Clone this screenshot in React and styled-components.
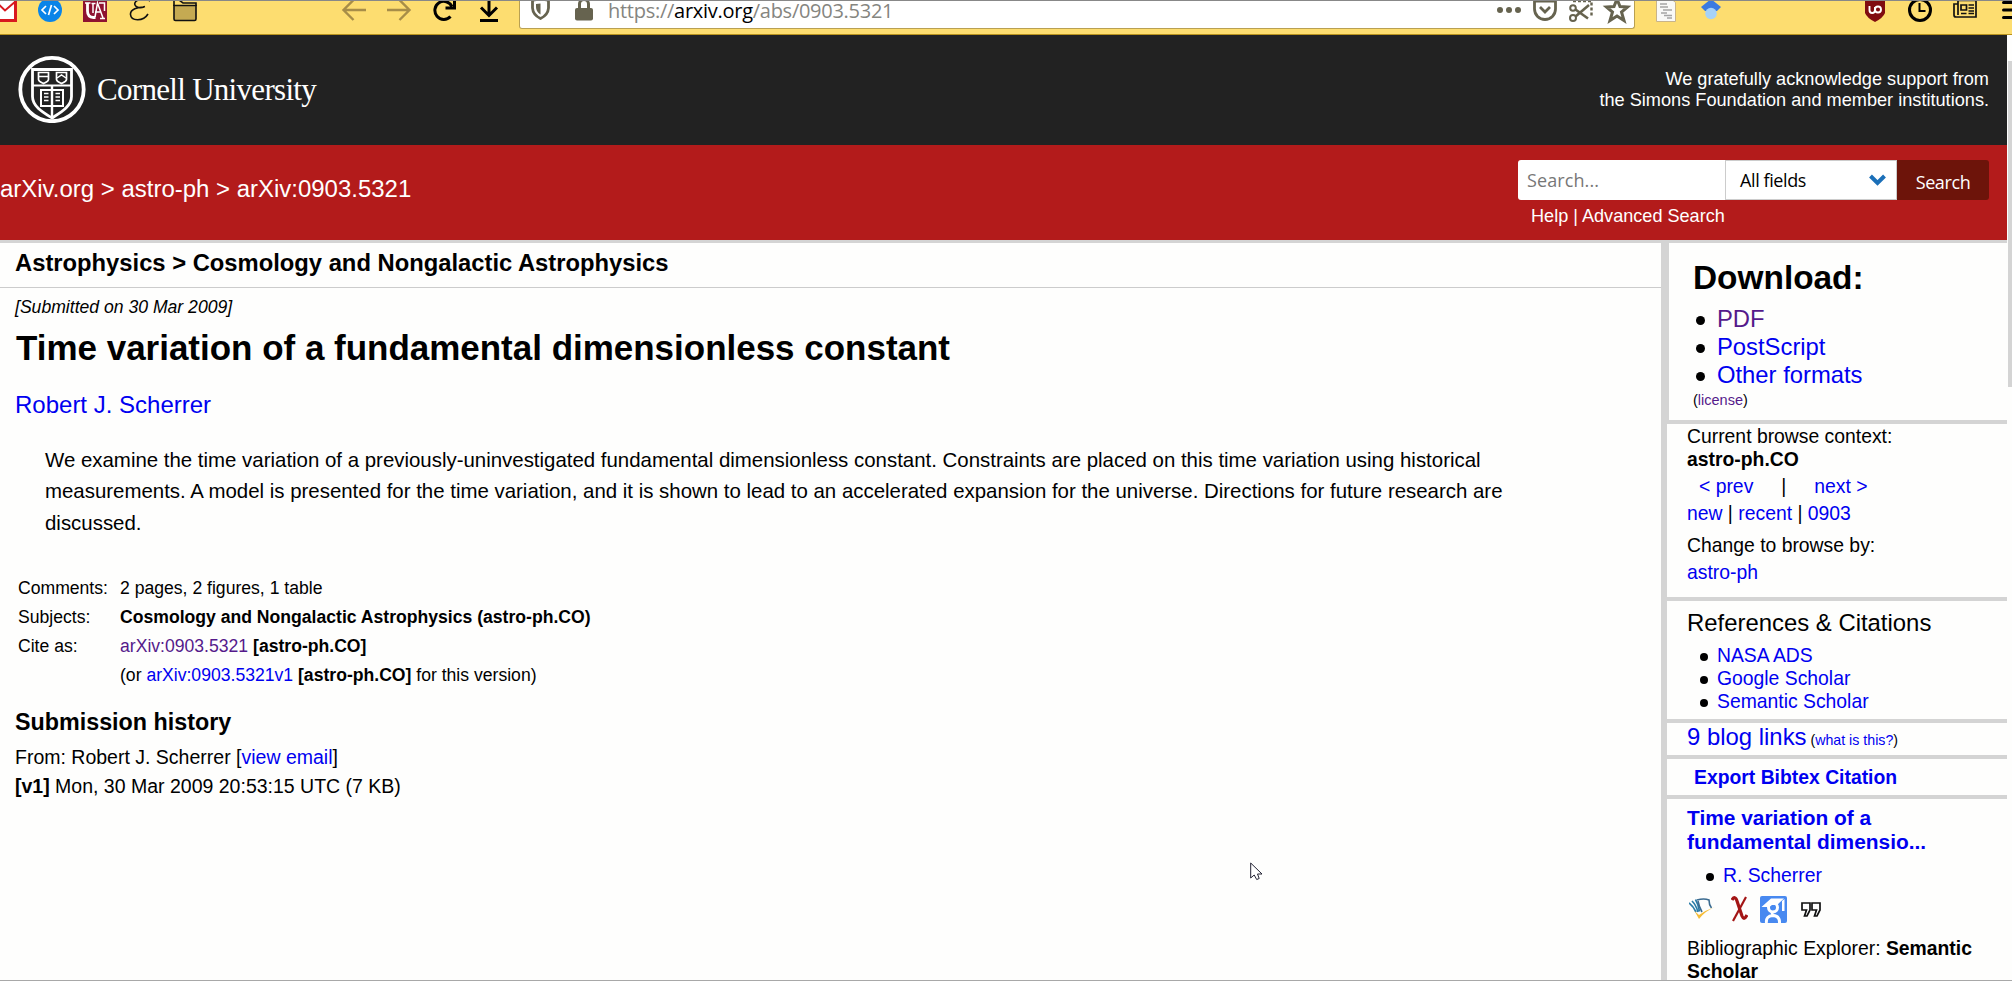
import React from "react";
import styled, { createGlobalStyle } from "styled-components";

const Global = createGlobalStyle`
  * { box-sizing: border-box; }
  html, body { margin: 0; padding: 0; height: 981px; overflow: hidden; background: #fefefd; }
  body { font-family: "Liberation Sans", Arial, sans-serif; color: #000; }
  a { color: #0000f0; text-decoration: none; }
  h1, h2, h3, p, ul, dl { margin: 0; padding: 0; }
  ul { list-style: none; }
`;

const Window = styled.div`
  position: relative;
  width: 2012px;
  height: 981px;
  overflow: hidden;
  display: flex;
  flex-direction: column;
  border-top: 1px solid #888;
  border-bottom: 1px solid #a8a8a8;
`;

/* browser toolbar */
const Toolbar = styled.div`
  height: 34px;
  flex: none;
  display: flex;
  align-items: flex-start;
  background: #fddd70;
  border-bottom: 1px solid #b8921d;
  overflow: hidden;
`;
const ToolIcon = styled.svg`
  display: block;
  flex: none;
  width: ${(p) => p.$w || 24}px;
  height: 24px;
  margin-top: -2px;
  margin-left: ${(p) => p.$gap || 0}px;
  overflow: visible;
`;
const UrlBar = styled.div`
  flex: none;
  width: 1116px;
  height: 28px;
  margin-left: 21px;
  padding-right: 5px;
  display: flex;
  align-items: flex-start;
  background: #fff;
  border: 1px solid #b9a052;
  border-top: 0;
  border-radius: 0 0 3px 3px;
`;
const Url = styled.div`
  width: 600px;
  margin-left: 15px;
  margin-top: -4px;
  font: 20px/28px "Open Sans", "Noto Sans", sans-serif;
  letter-spacing: -0.27px;
  color: #85857f;
  white-space: nowrap;
  b { font-weight: 400; color: #000; }
`;
const Spacer = styled.div`
  flex: 1;
`;

/* page */
const Viewport = styled.div`
  flex: 1;
  min-height: 0;
  display: flex;
`;
const Page = styled.div`
  width: 2007px;
  display: flex;
  flex-direction: column;
`;
const Scrollbar = styled.div`
  width: 5px;
  padding: 26px 0 0 1px;
  background: #fefefd;
`;
const Thumb = styled.div`
  height: 326px;
  background: #d4d4d4;
`;

const Brand = styled.header`
  height: 110px;
  flex: none;
  display: flex;
  align-items: flex-start;
  justify-content: space-between;
  background: #222;
  color: #fff;
  padding: 0 18px;
`;
const Logo = styled.div`
  display: flex;
  align-items: flex-start;
  padding-top: 20px;
`;
const LogoText = styled.div`
  margin: 15px 0 0 11px;
  font: 31px/40px "Liberation Serif", serif;
  letter-spacing: -0.7px;
  white-space: nowrap;
`;
const Support = styled.p`
  padding-top: 34px;
  font-size: 18.17px;
  line-height: 21px;
  text-align: right;
`;

const RedBar = styled.div`
  height: 98px;
  flex: none;
  display: flex;
  justify-content: space-between;
  background: #b31b1b;
  border-bottom: 3px solid #d4d4d4;
  color: #fff;
`;
const Crumbs = styled.div`
  padding-top: 30px;
  font-size: 23.97px;
  line-height: 28px;
  white-space: nowrap;
`;
const SearchArea = styled.div`
  width: 489px;
  padding: 15px 18px 0 0;
`;
const SearchForm = styled.div`
  display: flex;
  height: 40px;
  font: 18px/38px "Open Sans", "Noto Sans", sans-serif;
  border-radius: 3px;
  overflow: hidden;
`;
const SearchInput = styled.div`
  width: 207px;
  padding: 1px 0 0 9px;
  background: #fff;
  color: #777;
  letter-spacing: 0.1px;
`;
const FieldSelect = styled.div`
  width: 172px;
  padding: 0 10px 0 14px;
  display: flex;
  align-items: center;
  justify-content: space-between;
  background: #fff;
  color: #000;
  border: 1px solid #ccc;
  letter-spacing: -0.4px;
`;
const SearchButton = styled.div`
  width: 92px;
  padding-top: 3px;
  text-align: center;
  background: #6d140a;
  letter-spacing: -0.4px;
`;
const SearchHelp = styled.div`
  padding-left: 13px;
  margin-top: 6px;
  font-size: 18.1px;
  line-height: 21px;
`;

const Body = styled.div`
  flex: 1;
  min-height: 0;
  display: flex;
`;
const Main = styled.main`
  width: 1661px;
`;
const SubjectHeader = styled.div`
  height: 45px;
  padding: 6px 0 0 15px;
  border-bottom: 1px solid #ccc;
  font-size: 23.77px;
  line-height: 28px;
  font-weight: 700;
`;
const Dateline = styled.div`
  padding: 8px 0 0 15px;
  font-size: 17.6px;
  line-height: 22px;
  font-style: italic;
`;
const Title = styled.h1`
  padding: 9px 0 0 16px;
  font-size: 34.97px;
  line-height: 42px;
`;
const Authors = styled.div`
  padding: 22px 0 0 15px;
  font-size: 24px;
  line-height: 28px;
`;
const Abstract = styled.p`
  padding: 26px 0 0 45px;
  font-size: 20.43px;
  line-height: 31.3px;
  white-space: nowrap;
`;
const Meta = styled.dl`
  display: grid;
  grid-template-columns: 102px 1fr;
  grid-auto-rows: 29px;
  padding: 35px 0 0 18px;
  font-size: 17.6px;
  line-height: 29px;
  dt, dd { margin: 0; white-space: nowrap; }
`;
const HistoryTitle = styled.h2`
  padding: 18px 0 0 15px;
  font-size: 23.3px;
  line-height: 28px;
`;
const HistoryLine = styled.div`
  padding-left: 15px;
  font-size: 19.5px;
  line-height: 29px;
  &:nth-of-type(1) { margin-top: 7px; }
`;

const Aside = styled.aside`
  width: 346px;
  border-left: 6px solid #d4d4d4;
`;
const Panel = styled.section`
  height: ${(p) => p.$h}px;
  padding: ${(p) => p.$top || 0}px 0 0 ${(p) => p.$left || 20}px;
  border-left: ${(p) => p.$edge || 0}px solid #d4d4d4;
  border-bottom: 4px solid #d4d4d4;
  white-space: nowrap;
  overflow: hidden;
`;
const Line = styled.div`
  font-size: ${(p) => p.$size || 19.35}px;
  line-height: ${(p) => p.$lh || 23}px;
  font-weight: ${(p) => (p.$bold ? 700 : 400)};
  margin-top: ${(p) => p.$gap || 0}px;
`;
const Bullets = styled.ul`
  margin-top: ${(p) => p.$gap || 0}px;
  padding-left: ${(p) => p.$indent}px;
  font-size: ${(p) => p.$size || 19.35}px;
`;
const Bullet = styled.li`
  display: flex;
  align-items: center;
  line-height: ${(p) => p.$lh || 23}px;
  &::before {
    content: "";
    width: ${(p) => p.$dot || 8}px;
    height: ${(p) => p.$dot || 8}px;
    margin: 3px ${(p) => p.$space}px 0 0;
    border-radius: 50%;
    background: #000;
  }
`;
const Visited = styled.a`
  && { color: #551a8b; }
`;
const Small = styled.span`
  font-size: 14.2px;
`;
const PrevNext = styled(Line)`
  display: flex;
  padding-left: 12px;
  span { margin: 0 28px; }
`;
const IconRow = styled.div`
  display: flex;
  align-items: center;
  height: 28px;
  margin-top: 8px;
  padding-left: 2px;
`;
const PaperIcon = styled.svg`
  display: block;
  flex: none;
  margin-left: ${(p) => p.$gap || 0}px;
`;
const Pointer = styled.svg`
  position: absolute;
  left: 1250px;
  top: 861px;
`;

const Seal = () => (
  <svg width="68" height="68" viewBox="0 0 68 68" fill="none" stroke="#fff">
    <circle cx="34" cy="34.5" r="31.7" strokeWidth="3.8" />
    <path d="M14.5 14.5h39v27c0 10-11 16-19.500 21.500c-9-5.500-19.500-11.500-19.500-21.500z" strokeWidth="2.800" />
    <path d="M14 30.500h40" strokeWidth="2" />
    <path d="M34 31v32" strokeWidth="2.400" />
    <path d="M20.500 17.500h10v7c0 2-3 3-5 4c-2-1-5-2-5-4zM38.500 17.500h10v7c0 2-3 3-5 4c-2-1-5-2-5-4z" strokeWidth="1.700" />
    <path d="M20.500 21.500h10M39 23l4.500-3l4.500 3" strokeWidth="1.500" />
    <path d="M33 35h-10v16h10M35 35h10v16h-10" strokeWidth="2" />
    <path d="M26 38.500h4.500M26 42h4.500M26 45.500h4.500M37.500 38.500h4.500M37.500 42h4.500M37.500 45.500h4.500" strokeWidth="1.500" />
  </svg>
);

const BrowserBar = () => (
  <Toolbar>
    <ToolIcon $w={17} viewBox="0 0 17 24">
      <rect x="-7" y="0" width="24" height="22.500" fill="#fff" />
      <path d="M-7 21.500h22.500V1" fill="none" stroke="#d8191f" strokeWidth="3" />
      <path d="M-7 0L5 11.500L16 2" fill="none" stroke="#d8191f" strokeWidth="2" />
    </ToolIcon>
    <ToolIcon $gap={21}>
      <circle cx="12" cy="11" r="12" fill="#0a84e8" />
      <path d="M8 7l-4 4l4 4M16 7l4 4l-4 4M13.500 6l-3 10" fill="none" stroke="#fff" strokeWidth="1.700" />
    </ToolIcon>
    <ToolIcon $gap={21}>
      <rect width="24" height="23" fill="#8e1230" />
      <path d="M4.500 4v8q0 6 6 6.500h2" fill="none" stroke="#fff" strokeWidth="2.800" />
      <path d="M2 4h5.500M10 5v9M8.500 4.500h4M12 18L14.500 4l5.500 15M12 13h6M17 19.500h5M16 4h5.500v8" fill="none" stroke="#fff" strokeWidth="1.500" />
    </ToolIcon>
    <ToolIcon $gap={23} $w={20}>
      <path d="M20 2C14-2 3 1 5 6c1 3 6 3 9 2C8 8 0 10 .5 15.500c.5 7 13 7 17.500-.5M13 8l2-.5" fill="none" stroke="#111" strokeWidth="1.600" />
    </ToolIcon>
    <ToolIcon $gap={23}>
      <path d="M1 6.500h22V20q0 1.500-1.500 1.500h-19Q1 21.500 1 20z" fill="#c5aa52" stroke="#111" strokeWidth="1.600" />
      <path d="M1 7V0M6 1l4 3h13v3" fill="none" stroke="#111" strokeWidth="1.600" />
    </ToolIcon>
    <ToolIcon $gap={145} fill="none" stroke="#a78d48" strokeWidth="2.400">
      <path d="M24 11H1.500M11.500 1l-10 10l10 10" />
    </ToolIcon>
    <ToolIcon $gap={21} fill="none" stroke="#a78d48" strokeWidth="2.400">
      <path d="M0 11h22.500M12.500 1l10 10l-10 10" />
    </ToolIcon>
    <ToolIcon $gap={22} fill="none" stroke="#000" strokeWidth="3">
      <path d="M17.500 17.500A9 9 0 1 1 19 7.500M21.500 0v9h-9" />
    </ToolIcon>
    <ToolIcon $gap={23} $w={18} viewBox="0 0 18 24" fill="none" stroke="#000" strokeWidth="3">
      <path d="M9-1v17M1 8.500L9 16.500L17 8.500M0 21.500h18" />
    </ToolIcon>
    <UrlBar>
      <ToolIcon $gap={11} $w={19} viewBox="0 0 19 24">
        <path d="M1.500 1.500Q9.500-1 17.500 1.500V9Q17 16 9.500 19.500Q2 16 1.500 9z" fill="none" stroke="#66634f" strokeWidth="2.800" />
        <path d="M9.500 4.500v11Q5 13 5 8V5z" fill="#66634f" />
      </ToolIcon>
      <ToolIcon $gap={25} $w={18} viewBox="0 0 18 24">
        <path d="M4.500 10V5a4.500 4.500 0 0 1 9 0v5" fill="none" stroke="#66634f" strokeWidth="3" />
        <rect y="9" width="18" height="12.500" rx="2" fill="#66634f" />
      </ToolIcon>
      <Url>https://<b>arxiv.org</b>/abs/0903.5321</Url>
      <Spacer />
      <ToolIcon fill="#66634f">
        <circle cx="3" cy="11" r="3" /><circle cx="12" cy="11" r="3" /><circle cx="21" cy="11" r="3" />
      </ToolIcon>
      <ToolIcon $gap={12} fill="none" stroke="#66634f" strokeWidth="2.800">
        <path d="M1.500 2h21v8a10.500 10.500 0 0 1-21 0zM7 8l5 5l5-5" />
      </ToolIcon>
      <ToolIcon $gap={12} fill="none" stroke="#66634f" strokeWidth="2">
        <circle cx="4" cy="9" r="2.800" /><circle cx="4" cy="19" r="3" />
        <path d="M6.500 10.500L19 19.500" strokeWidth="2.600" /><path d="M6.500 17.500L20 6" strokeWidth="2.600" />
        <path d="M4 2h18.500v15" strokeDasharray="3 2" strokeWidth="2.400" />
      </ToolIcon>
      <ToolIcon $gap={12} fill="none" stroke="#66634f" strokeWidth="3">
        <path d="M12 0l3 7.500l7.500.5l-6 5l2.500 8.500L12 17l-7 4.500L7.500 13l-6-5L9 7.500z" />
      </ToolIcon>
    </UrlBar>
    <ToolIcon $gap={21} $w={20} viewBox="0 0 20 24">
      <path d="M.5 0h15l4 3.500v19H.5z" fill="#f9f9f7" stroke="#c9b489" />
      <path d="M4 5h7M4 8h8M7 11h9M5 14h6M8 16.500h8M11 19h5" stroke="#a5a5a5" strokeWidth="1.300" />
    </ToolIcon>
    <ToolIcon $gap={25} $w={20} viewBox="0 0 20 24">
      <path d="M10 0L20 8l-4 4H4L0 8z" fill="#3b7ae0" />
      <circle cx="10" cy="14.500" r="5.800" fill="#a6d2f8" />
    </ToolIcon>
    <ToolIcon $gap={143} $w={22} viewBox="0 0 22 24">
      <path d="M1 0h20v14q-2 5-10 9Q3 19 1 14z" fill="#800c10" />
      <path d="M5.500 7v4q0 3 2.700 3T11 11V8" fill="none" stroke="#fff" strokeWidth="1.900" />
      <circle cx="14" cy="10.500" r="3" fill="none" stroke="#fff" strokeWidth="1.900" />
    </ToolIcon>
    <ToolIcon $gap={22} fill="none" stroke="#000">
      <circle cx="12" cy="11" r="10.500" strokeWidth="3" />
      <path d="M11.500 4v8h6" strokeWidth="2" />
    </ToolIcon>
    <ToolIcon $gap={21} fill="none" stroke="#111" strokeWidth="1.700">
      <path d="M5 1.500h18V18H3Q1 18 1 16V5h4zM5 5v11" />
      <path d="M8 6h5.500v5H8zM15.500 6H21M15.500 9H21M15.500 12H21M8 14.500h5.500M15.500 14.500H21" />
    </ToolIcon>
    <ToolIcon $gap={25} $w={10} viewBox="0 0 10 24">
      <path d="M1.500 3.500h14M1.500 11h14M1.500 18.500h14" stroke="#000" strokeWidth="3" strokeLinecap="round" />
    </ToolIcon>
  </Toolbar>
);

export default function App() {
  return (
    <Window>
      <Global />
      <BrowserBar />
      <Viewport>
        <Page>
          <Brand>
            <Logo><Seal /><LogoText>Cornell University</LogoText></Logo>
            <Support>We gratefully acknowledge support from<br />the Simons Foundation and member institutions.</Support>
          </Brand>
          <RedBar>
            <Crumbs>arXiv.org &gt; astro-ph &gt; arXiv:0903.5321</Crumbs>
            <SearchArea>
              <SearchForm>
                <SearchInput>Search...</SearchInput>
                <FieldSelect>
                  All fields
                  <svg width="17" height="12" viewBox="0 0 17 12"><path d="M1.500 2L8.500 9L15.500 2" fill="none" stroke="#1b6fb8" strokeWidth="4" /></svg>
                </FieldSelect>
                <SearchButton>Search</SearchButton>
              </SearchForm>
              <SearchHelp>Help | Advanced Search</SearchHelp>
            </SearchArea>
          </RedBar>
          <Body>
            <Main>
              <SubjectHeader>Astrophysics &gt; Cosmology and Nongalactic Astrophysics</SubjectHeader>
              <Dateline>[Submitted on 30 Mar 2009]</Dateline>
              <Title>Time variation of a fundamental dimensionless constant</Title>
              <Authors><a>Robert J. Scherrer</a></Authors>
              <Abstract>
                We examine the time variation of a previously-uninvestigated fundamental dimensionless constant. Constraints are placed on this time variation using historical<br />
                measurements. A model is presented for the time variation, and it is shown to lead to an accelerated expansion for the universe. Directions for future research are<br />
                discussed.
              </Abstract>
              <Meta>
                <dt>Comments:</dt><dd>2 pages, 2 figures, 1 table</dd>
                <dt>Subjects:</dt><dd><b>Cosmology and Nongalactic Astrophysics (astro-ph.CO)</b></dd>
                <dt>Cite as:</dt><dd><Visited>arXiv:0903.5321</Visited> <b>[astro-ph.CO]</b></dd>
                <dt /><dd>(or <a>arXiv:0903.5321v1</a> <b>[astro-ph.CO]</b> for this version)</dd>
              </Meta>
              <section>
                <HistoryTitle>Submission history</HistoryTitle>
                <HistoryLine>From: Robert J. Scherrer [<a>view email</a>]</HistoryLine>
                <HistoryLine><b>[v1]</b> Mon, 30 Mar 2009 20:53:15 UTC (7 KB)</HistoryLine>
              </section>
            </Main>
            <Aside>
              <Panel $h={181} $top={14} $left={24} $edge={2}>
                <Line as="h1" $bold $size={33.4} $lh={42}>Download:</Line>
                <Bullets $indent={3} $gap={6} $size={23.8}>
                  <Bullet $lh={28} $dot={9} $space={12}><Visited>PDF</Visited></Bullet>
                  <Bullet $lh={28} $dot={9} $space={12}><a>PostScript</a></Bullet>
                  <Bullet $lh={28} $dot={9} $space={12}><a>Other formats</a></Bullet>
                </Bullets>
                <Line $size={14.5} $lh={20} $gap={1}>(<Visited>license</Visited>)</Line>
              </Panel>
              <Panel $h={177} $top={1}>
                <Line>Current browse context:</Line>
                <Line $bold>astro-ph.CO</Line>
                <PrevNext $gap={4}><a>&lt; prev</a><span>|</span><a>next &gt;</a></PrevNext>
                <Line $gap={4}><a>new</a> | <a>recent</a> | <a>0903</a></Line>
                <Line $gap={9}>Change to browse by:</Line>
                <Line $gap={4}><a>astro-ph</a></Line>
              </Panel>
              <Panel $h={122} $top={8}>
                <Line $size={23.9} $lh={28}>References &amp; Citations</Line>
                <Bullets $indent={13} $gap={7}>
                  <Bullet $space={9}><a>NASA ADS</a></Bullet>
                  <Bullet $space={9}><a>Google Scholar</a></Bullet>
                  <Bullet $space={9}><a>Semantic Scholar</a></Bullet>
                </Bullets>
              </Panel>
              <Panel $h={36}>
                <Line $size={23.9} $lh={28}><a>9 blog links</a><Small> (<a>what is this?</a>)</Small></Line>
              </Panel>
              <Panel $h={40} $top={7} $left={27}>
                <Line $bold><a>Export Bibtex Citation</a></Line>
              </Panel>
              <Panel $h={190} $top={7}>
                <Line $bold $size={20.9} $lh={24}><a>Time variation of a<br />fundamental dimensio...</a></Line>
                <Bullets $indent={19} $gap={9}>
                  <Bullet $lh={24} $space={9}><a>R. Scherrer</a></Bullet>
                </Bullets>
                <IconRow>
                  <PaperIcon width="26" height="23" viewBox="0 0 26 23" fill="none">
                    <path d="M0 5q4 3 7 9M3 3q4 4 6 11M6.500 1.500q3 5 4 12" stroke="#2a7ca8" strokeWidth="1.700" />
                    <path d="M8 2q7-2 12 0q0 5 2.500 8M9 3q1 6 4 11" stroke="#3b6b90" strokeWidth="1.600" />
                    <path d="M5.500 13L10 21Q16 13 26 9Q17 12 10 17z" fill="#f6bd38" />
                  </PaperIcon>
                  <PaperIcon $gap={16} width="17" height="26" viewBox="0 0 17 26" fill="none" stroke="#a31515">
                    <path d="M1 4Q4-1 6 5l5 15q2 5 5-1" strokeWidth="3.200" /><path d="M15 1L2 25" strokeWidth="2.200" />
                  </PaperIcon>
                  <PaperIcon $gap={12} width="27" height="27" viewBox="0 0 27 27">
                    <rect width="27" height="27" rx="2" fill="#4889f0" />
                    <circle cx="13" cy="11.500" r="4.500" fill="none" stroke="#fff" strokeWidth="3" />
                    <path d="M1.500 11L11 2.500h13L17 9h-5l-3 2z" fill="#fff" />
                    <path d="M24.500 3v12h-2.500V5z" fill="#fff" />
                    <path d="M14 15.500q-4 2 0 4" fill="none" stroke="#fff" strokeWidth="2.500" />
                    <path d="M6.500 27q-1-7 6.500-7.500q7 .5 6.500 7.500" fill="none" stroke="#fff" strokeWidth="3" />
                  </PaperIcon>
                  <PaperIcon $gap={14} width="20" height="15" viewBox="0 0 20 15" fill="#fff" stroke="#111" strokeWidth="1.700">
                    <path d="M1 1h8v7l-3 6H3.500l2-6H1zM11 1h8v7l-3 6h-2.500l2-6H11z" />
                  </PaperIcon>
                </IconRow>
                <Line $gap={14}>Bibliographic Explorer: <b>Semantic<br />Scholar</b></Line>
              </Panel>
            </Aside>
          </Body>
        </Page>
        <Scrollbar><Thumb /></Scrollbar>
      </Viewport>
      <Pointer width="13" height="19" viewBox="0 0 13 19">
        <path d="M.7 1v15l3.500-3l2.500 4.500l2.500-1L7.500 12h4.500z" fill="#fff" stroke="#223" strokeWidth="1" />
      </Pointer>
    </Window>
  );
}
